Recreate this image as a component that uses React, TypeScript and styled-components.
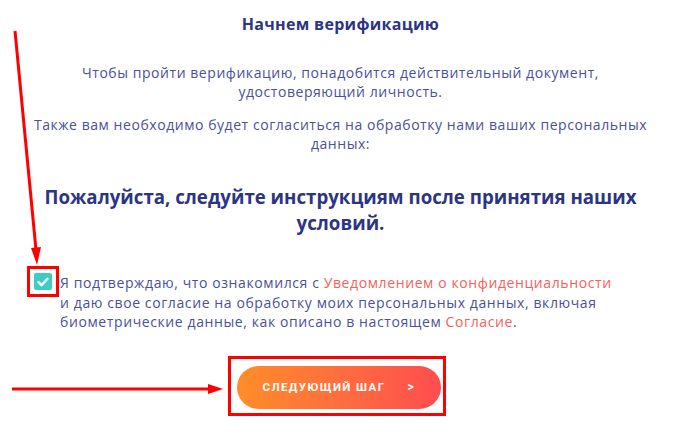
import React from 'react';
import styled, { createGlobalStyle } from 'styled-components';

const GlobalStyle = createGlobalStyle`
  html, body {
    margin: 0;
    padding: 0;
    background: #ffffff;
  }
  body {
    font-family: "Open Sans", "Noto Sans", sans-serif;
  }
`;

const Page = styled.div`
  position: relative;
  width: 681px;
  height: 432px;
  overflow: hidden;
  background: #fff;
`;

const Content = styled.div`
  display: flex;
  flex-direction: column;
  align-items: center;
  padding-top: 13px;
`;

const Title = styled.h2`
  margin: 0 0 28px;
  font-size: 16px;
  line-height: 22px;
  font-weight: 700;
  letter-spacing: 0.3px;
  color: #2c3486;
`;

const Text = styled.p`
  margin: 0 0 14px;
  width: 640px;
  text-align: center;
  font-size: 14px;
  line-height: 19px;
  letter-spacing: 0.55px;
  color: #4a509c;
`;

const Heading = styled.h3`
  margin: 17px 0 0;
  width: 640px;
  text-align: center;
  font-size: 18.7px;
  line-height: 26px;
  font-weight: 700;
  color: #2c3486;
`;

const ConsentRow = styled.div`
  align-self: stretch;
  display: flex;
  align-items: flex-start;
  margin-top: 30px;
  padding-left: 27px;
`;

const CheckFrame = styled.div`
  flex: none;
  width: 26px;
  height: 25px;
  border: 3px solid #ff0000;
  display: flex;
  align-items: center;
  justify-content: center;
`;

const Checkbox = styled.span`
  width: 18px;
  height: 17px;
  border-radius: 2px;
  background: #3ecdc6;
  display: flex;
  align-items: center;
  justify-content: center;
`;

const ConsentText = styled.p`
  margin: 0;
  padding: 7px 0 0 1px;
  font-size: 14px;
  line-height: 19.5px;
  letter-spacing: 0.6px;
  color: #4a509c;
`;

const Link = styled.a`
  color: #f5615a;
  text-decoration: none;
`;

const ButtonFrame = styled.div`
  margin-top: 24px;
  margin-right: 8px;
  border: 3px solid #ff0000;
  padding: 7px 2px 4px 6px;
`;

const NextButton = styled.button`
  width: 204px;
  height: 43px;
  border: none;
  border-radius: 22px;
  background: linear-gradient(90deg, #ff8d28 0%, #ff6e3e 50%, #ff4d4f 100%);
  color: #fff;
  font-family: "Roboto", "Liberation Sans", sans-serif;
  font-weight: 700;
  font-size: 11.5px;
  letter-spacing: 1.4px;
  display: flex;
  align-items: center;
  padding: 0 0 0 26px;
  cursor: pointer;
`;

const Chevron = styled.span`
  margin-left: 22px;
  font-size: 12px;
`;

const Annotations = styled.svg`
  position: absolute;
  left: 0;
  top: 0;
  pointer-events: none;
`;

const App: React.FC = () => {
  return (
    <Page>
      <GlobalStyle />
      <Content>
        <Title>Начнем верификацию</Title>
        <Text>
          Чтобы пройти верификацию, понадобится действительный документ,
          <br />
          удостоверяющий личность.
        </Text>
        <Text>
          Также вам необходимо будет согласиться на обработку нами ваших персональных
          <br />
          данных:
        </Text>
        <Heading>
          Пожалуйста, следуйте инструкциям после принятия наших
          <br />
          условий.
        </Heading>
        <ConsentRow>
          <CheckFrame>
            <Checkbox>
              <svg width="12" height="10" viewBox="0 0 12 10">
                <path d="M1.5 5.2 L4.6 8.2 L10.5 1.8" fill="none" stroke="#fff" strokeWidth="2.4" strokeLinecap="round" strokeLinejoin="round" />
              </svg>
            </Checkbox>
          </CheckFrame>
          <ConsentText>
            Я подтверждаю, что ознакомился с <Link>Уведомлением о конфиденциальности</Link>
            <br />
            и даю свое согласие на обработку моих персональных данных, включая
            <br />
            биометрические данные, как описано в настоящем <Link>Согласие</Link>.
          </ConsentText>
        </ConsentRow>
        <ButtonFrame>
          <NextButton>
            СЛЕДУЮЩИЙ ШАГ
            <Chevron>&gt;</Chevron>
          </NextButton>
        </ButtonFrame>
      </Content>
      <Annotations width="681" height="432" viewBox="0 0 681 432">
        <line x1="15" y1="31" x2="36" y2="250" stroke="#ff0000" strokeWidth="3" />
        <polygon points="31,248 41,247 37,265" fill="#ff0000" />
        <line x1="12" y1="389" x2="210" y2="389" stroke="#ff0000" strokeWidth="3" />
        <polygon points="208,384 223,389 208,394" fill="#ff0000" />
      </Annotations>
    </Page>
  );
};

export default App;
